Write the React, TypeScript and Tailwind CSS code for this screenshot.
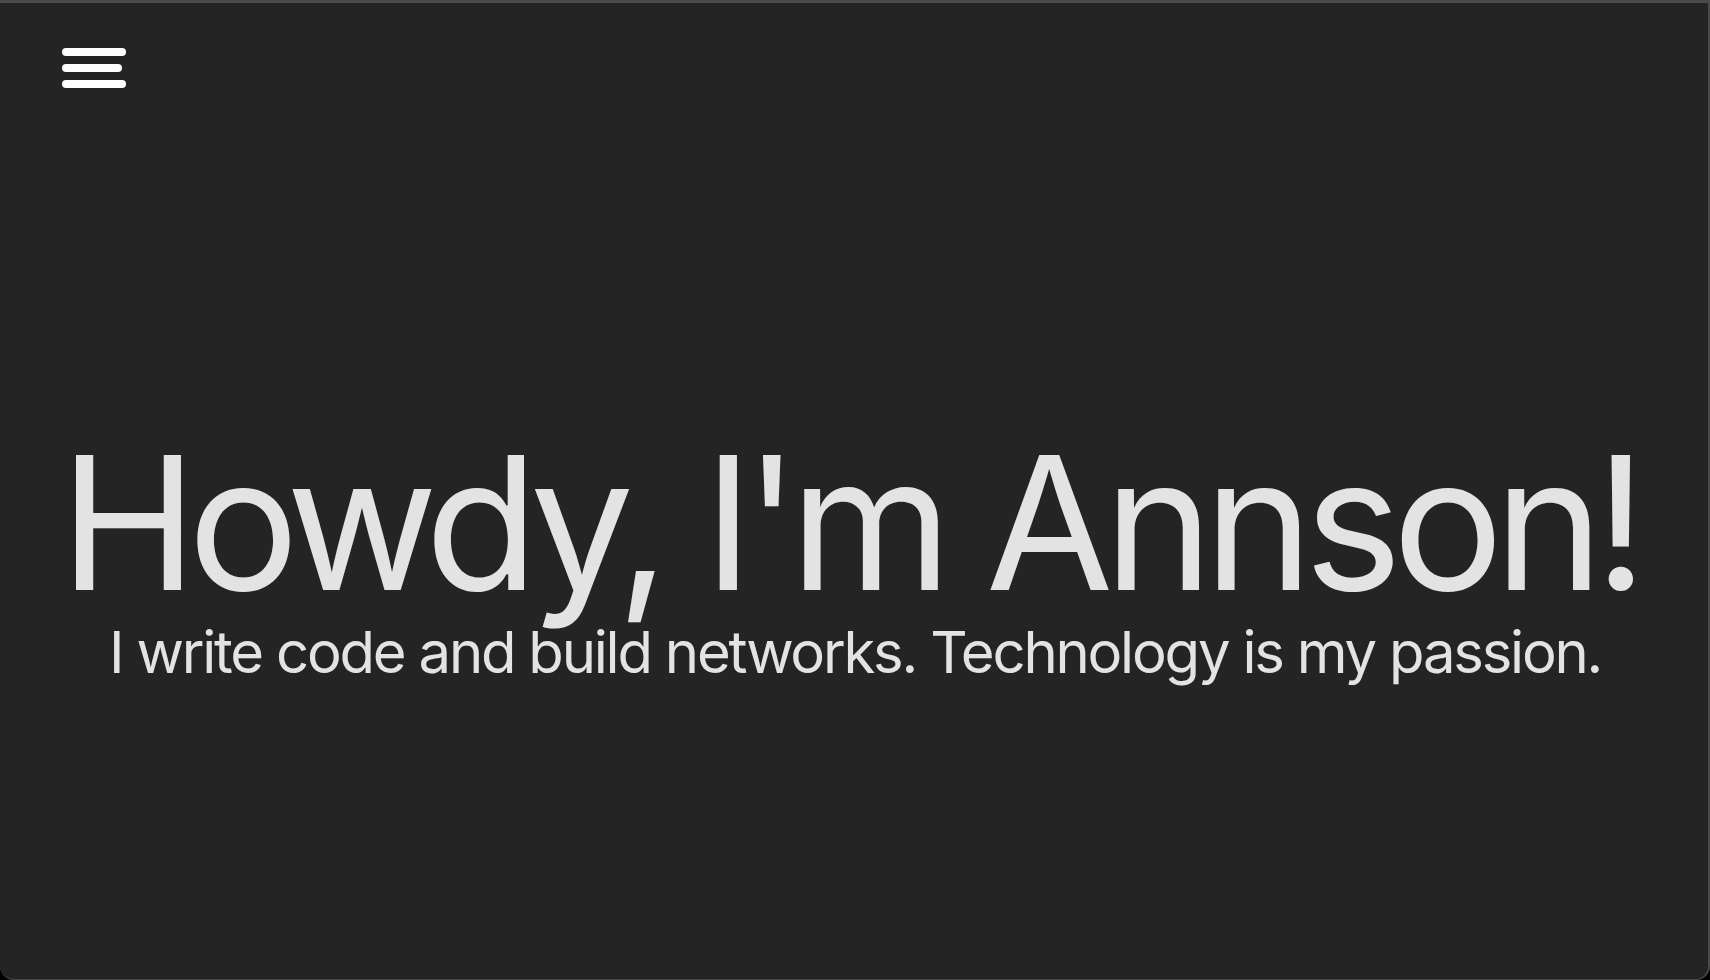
export default function App() {
  return (
    <div className="h-[980px] w-full bg-black overflow-hidden">
      <div className="h-full w-full bg-[#242424] border-t-[3px] border-r-2 border-b border-[#4a4a4c] rounded-b-[14px] flex flex-col text-[#e3e3e3] font-['Inter','Liberation_Sans',sans-serif]">
        {/* Nav */}
        <nav className="pl-[62px] pt-[45px]">
          <button className="flex flex-col gap-[8px] w-[64px]" aria-label="Menu">
            <span className="block h-[8px] w-[64px] rounded-full bg-white" />
            <span className="block h-[8px] w-[60px] rounded-full bg-white" />
            <span className="block h-[8px] w-[64px] rounded-full bg-white" />
          </button>
        </nav>

        {/* Hero */}
        <main className="flex flex-col items-center pt-[343px]">
          <h1 className="pr-[10px] text-[185px] leading-none font-normal tracking-[-0.05em]">
            Howdy, I'm Annson!
          </h1>
          <p className="mt-[7px] pl-[2px] text-[58px] leading-none font-normal tracking-[-0.038em]">
            I write code and build networks. Technology is my passion.
          </p>
        </main>
      </div>
    </div>
  );
}
